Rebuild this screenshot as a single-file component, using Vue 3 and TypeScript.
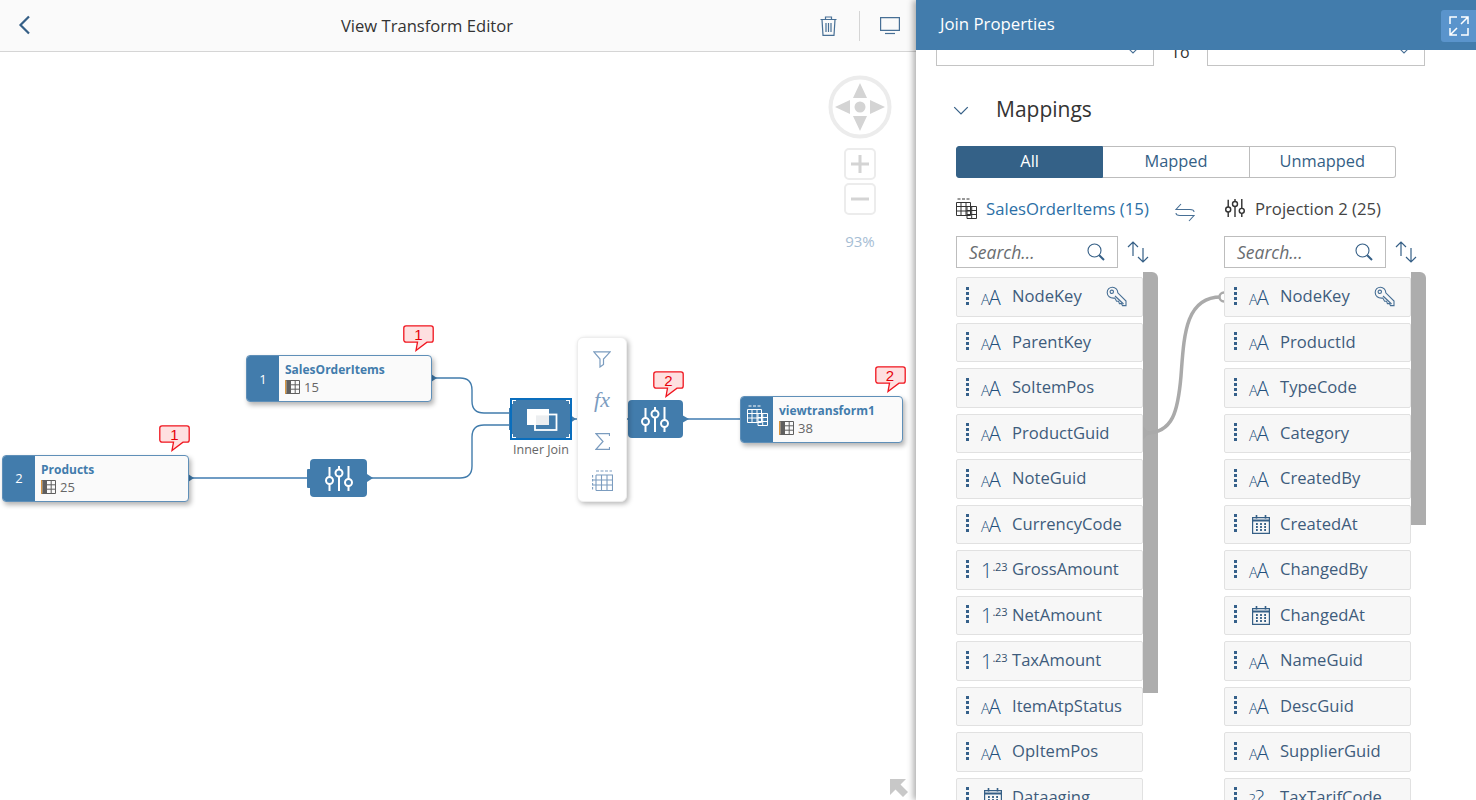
<script setup lang="ts">
type Kind = 'text' | 'num' | 'date' | 'unk'
interface Field { name: string; kind: Kind; key?: boolean }

const leftFields: Field[] = [
  { name: 'NodeKey', kind: 'text', key: true },
  { name: 'ParentKey', kind: 'text' },
  { name: 'SoItemPos', kind: 'text' },
  { name: 'ProductGuid', kind: 'text' },
  { name: 'NoteGuid', kind: 'text' },
  { name: 'CurrencyCode', kind: 'text' },
  { name: 'GrossAmount', kind: 'num' },
  { name: 'NetAmount', kind: 'num' },
  { name: 'TaxAmount', kind: 'num' },
  { name: 'ItemAtpStatus', kind: 'text' },
  { name: 'OpItemPos', kind: 'text' },
  { name: 'Dataaging', kind: 'date' },
]
const rightFields: Field[] = [
  { name: 'NodeKey', kind: 'text', key: true },
  { name: 'ProductId', kind: 'text' },
  { name: 'TypeCode', kind: 'text' },
  { name: 'Category', kind: 'text' },
  { name: 'CreatedBy', kind: 'text' },
  { name: 'CreatedAt', kind: 'date' },
  { name: 'ChangedBy', kind: 'text' },
  { name: 'ChangedAt', kind: 'date' },
  { name: 'NameGuid', kind: 'text' },
  { name: 'DescGuid', kind: 'text' },
  { name: 'SupplierGuid', kind: 'text' },
  { name: 'TaxTarifCode', kind: 'unk' },
]
const columns = [
  { id: 'l', fields: leftFields, barHeight: 421 },
  { id: 'r', fields: rightFields, barHeight: 253 },
]
const nodes = [
  { id: 'a', left: 246, top: 355, width: 186, tag: '1', name: 'SalesOrderItems', count: 15 },
  { id: 'b', left: 2, top: 454.5, width: 186.5, tag: '2', name: 'Products', count: 25 },
  { id: 'c', left: 740, top: 395.5, width: 163, tag: '', name: 'viewtransform1', count: 38 },
]
const badges = [
  { left: 403, top: 325, n: 1 },
  { left: 159, top: 425, n: 1 },
  { left: 653, top: 370.5, n: 2 },
  { left: 874.5, top: 365.5, n: 2 },
]
const projections = [
  { left: 628, top: 400, width: 54.5 },
  { left: 310, top: 459, width: 57 },
]
const box = (l: number, t: number, w?: number) => ({
  left: `${l}px`,
  top: `${t}px`,
  ...(w ? { width: `${w}px` } : {}),
})
</script>

<template>
  <div class="app">
    <svg class="defs" width="0" height="0" aria-hidden="true">
      <symbol id="i-sliders" viewBox="0 0 28 25">
        <g fill="none" stroke="currentColor" stroke-width="2">
          <path d="M4.5 1V11M4.5 18V25M14 0V3.5M14 10.5V25M23.5 0V13M23.5 20V25" />
          <circle cx="4.5" cy="14.5" r="3.5" />
          <circle cx="14" cy="7" r="3.5" />
          <circle cx="23.5" cy="16.5" r="3.5" />
        </g>
      </symbol>
      <symbol id="i-viewtable" viewBox="0 0 21 21">
        <g fill="none" stroke="currentColor" stroke-width="1">
          <path d="M1.5 1H14" stroke-dasharray="3 1.5" />
          <path d="M.5 4.5H14.5V17.5H.5ZM.5 8.500H14.500M.5 13H14.500M5 4.500V17.500M10 4.500V17.500" />
          <path d="M11 8.500H20.500V20.500H11ZM11 12.500H20.500M11 16.500H20.500M15.700 8.500V20.500" />
        </g>
      </symbol>
      <symbol id="i-calendar" viewBox="0 0 18 19">
        <g fill="none" stroke="currentColor" stroke-width="1.2">
          <path d="M.6 2.6H17.4V18.4H.6Z" />
          <path d="M.6 5.5H17.4" stroke-width="2" />
          <path d="M4.5 0V3.5M13.5 0V3.5" stroke-width="1.6" />
          <path d="M4 9H5.8M8.1 9H9.9M12.2 9H14M4 12H5.8M8.1 12H9.9M12.2 12H14M4 15H5.8M8.1 15H9.9M12.2 15H14" stroke-width="1.8" />
        </g>
      </symbol>
      <symbol id="i-key" viewBox="0 0 21 21">
        <g fill="none" stroke="currentColor" stroke-width="1.1">
          <path d="M1.2 6.5A5.2 5.2 0 0 1 6.5 1.2A5.6 5.6 0 0 1 11.8 6.8L20 15V19.6H16.5L15.4 17.6H13.4L12.6 15.2H10.6L8.8 12C4 12.6 1.2 10 1.2 6.5Z" />
          <circle cx="5.8" cy="5.8" r="1.7" />
          <path d="M9 10L17.5 18" />
        </g>
      </symbol>
      <symbol id="i-search" viewBox="0 0 18 18">
        <g fill="none" stroke="currentColor">
          <circle cx="7.5" cy="7.5" r="6.5" stroke-width="1.1" />
          <path d="M12.2 12.2L17 17" stroke-width="2" />
        </g>
      </symbol>
      <symbol id="i-sort" viewBox="0 0 22 22">
        <g fill="none" stroke="currentColor" stroke-width="1.2">
          <path d="M6 1V15M1 6L6 1L11 6" />
          <path d="M16 7V21M11 16L16 21L21 16" />
        </g>
      </symbol>
      <symbol id="i-chevron" viewBox="0 0 14 8">
        <path d="M1 1L7 7L13 1" fill="none" stroke="currentColor" stroke-width="1.1" />
      </symbol>
      <symbol id="i-nodetable" viewBox="0 0 15 14">
        <rect x="0" y="0" width="1.4" height="14" fill="#d9963f" />
        <rect x="1.4" y="0" width="4.6" height="14" fill="#5f5f5f" />
        <path d="M6 .5H14.5V13.5H6M6 4.8H14.5M6 9.2H14.5M10.2 .5V13.5M1.4 .5H6M1.4 13.5H6" fill="none" stroke="#5f5f5f" />
      </symbol>
    </svg>

    <section class="editor">
      <header class="editor-bar">
        <svg class="back" width="13" height="20" viewBox="0 0 13 20"><path d="M11 1.5L2.5 10L11 18.5" fill="none" stroke="#355f86" stroke-width="2.2" /></svg>
        <h1 class="editor-title">View Transform Editor</h1>
        <div class="editor-tools">
          <svg width="17" height="20" viewBox="0 0 17 20" class="tool"><g fill="none" stroke="#476f95" stroke-width="1.2"><path d="M.5 3.5H16.5M5.5 3.5V1H11.5V3.5" /><path d="M2 3.5L3 19.4H14L15 3.5" /><path d="M6 7V16M8.5 7V16M11 7V16" /></g></svg>
          <span class="tool-sep"></span>
          <svg width="20" height="18" viewBox="0 0 20 18" class="tool"><g fill="none" stroke="#476f95" stroke-width="1.2"><path d="M.6 .6H19.4V13.4H.6Z" /><path d="M5 16.5H15" /></g></svg>
        </div>
      </header>

      <div class="canvas">
        <svg class="wires" width="916" height="749" viewBox="0 52 916 749">
          <g fill="none" stroke="#427cac" stroke-width="1.4">
            <path d="M432 378H460Q472 378 472 390V401Q472 413 484 413H510" />
            <path d="M367 478H460Q472 478 472 466V437Q472 425 484 425H510" />
            <path d="M572 419H628" />
          </g>
          <g fill="none" stroke="#6f9cc4" stroke-width="2">
            <path d="M188 478H308" />
            <path d="M682 419H740" />
          </g>
          <g fill="#427cac">
            <path d="M431 374L437 378L431 382Z" />
            <path d="M188 474L194 478L188 482Z" />
            <path d="M367 474L373 478L367 482Z" />
            <path d="M571 415.500L576 419L571 422.500Z" />
            <path d="M682 415L689 419L682 423Z" />
            <rect x="307" y="469" width="4" height="19" rx="1" />
            <rect x="509" y="408" width="4" height="22" />
          </g>
        </svg>

        <article v-for="n in nodes" :key="n.id" class="node" :style="box(n.left, n.top, n.width)">
          <div class="node-tag">
            <template v-if="n.tag">{{ n.tag }}</template>
            <svg v-else width="21" height="21" class="node-view"><use href="#i-viewtable" /></svg>
          </div>
          <div class="node-body">
            <div class="node-name">{{ n.name }}</div>
            <div class="node-count">
              <svg width="15" height="14"><use href="#i-nodetable" /></svg>
              <span>{{ n.count }}</span>
            </div>
          </div>
        </article>

        <div v-for="p in projections" :key="p.left" class="proj" :style="box(p.left, p.top, p.width)">
          <svg width="28" height="25"><use href="#i-sliders" /></svg>
        </div>

        <div class="join">
          <div class="join-box">
            <svg width="33" height="24" viewBox="0 0 33 24">
              <rect x="2" y="2" width="22" height="16" fill="#fff" />
              <rect x="11" y="8" width="13" height="10" fill="#eceef0" />
              <rect x="10" y="7.500" width="21.500" height="15.500" fill="none" stroke="#fff" stroke-width="1.800" />
            </svg>
            <i class="corner c1"></i><i class="corner c2"></i><i class="corner c3"></i><i class="corner c4"></i>
          </div>
          <div class="join-label">Inner Join</div>
        </div>

        <div class="palette">
          <svg width="18" height="17" viewBox="0 0 18 17"><path d="M.8 .8H17.200L10.500 8V13.500L7 16V8Z" fill="none" stroke="#7b9cbf" stroke-width="1.200" /></svg>
          <span class="fx">fx</span>
          <svg width="15" height="17" viewBox="0 0 15 17"><path d="M14.500 3V.7H1L8 8.500L1 16.300H14.500V14" fill="none" stroke="#7b9cbf" stroke-width="1.200" /></svg>
          <svg width="21" height="21" viewBox="0 0 21 21"><g fill="none" stroke="#7b9cbf" stroke-width="1.100"><path d="M4 1H20" stroke-dasharray="3 1.500" /><path d="M.6 5V20.500" stroke-dasharray="2.500 1.500" /><path d="M4 5H20.500V20.500H4M4 5V20.500M9.500 5V20.500M15 5V20.500M.6 10H20.500M.6 15H20.500" /></g></svg>
        </div>

        <div v-for="(b, i) in badges" :key="i" class="badge" :style="box(b.left, b.top)">
          <svg width="31" height="27" viewBox="0 0 31 27"><path d="M3 .8H28A2.200 2.200 0 0 1 30.200 3V15A2.200 2.200 0 0 1 28 17.200H24L13 25.500L14.500 17.200H3A2.200 2.200 0 0 1 .8 15V3A2.200 2.200 0 0 1 3 .8Z" fill="#fee0e0" stroke="#f0141e" stroke-width="1.300" /></svg>
          <span class="badge-n">{{ b.n }}</span>
        </div>

        <div class="navigator">
          <svg width="64" height="64" viewBox="0 0 64 64">
            <circle cx="32" cy="32" r="29.500" fill="#fff" stroke="#ececec" stroke-width="4" />
            <g fill="#d4d4d4">
              <path d="M32 8L39 23H25Z" /><path d="M32 56L39 41H25Z" />
              <path d="M7 32L22 25V39Z" /><path d="M57 32L42 25V39Z" />
              <circle cx="32" cy="32" r="5.500" />
            </g>
          </svg>
          <div class="zoom-btns">
            <div class="zoom-btn"><svg width="20" height="20" viewBox="0 0 20 20"><path d="M10 1V19M1 10H19" stroke="#d4d4d4" stroke-width="3" /></svg></div>
            <div class="zoom-btn"><svg width="20" height="20" viewBox="0 0 20 20"><path d="M1 10H19" stroke="#d4d4d4" stroke-width="3" /></svg></div>
          </div>
          <div class="zoom-pct">93%</div>
        </div>

        <svg class="resize" width="18" height="18" viewBox="0 0 18 18"><path d="M0 0H16L10.500 5.500L18 13L13 18L5.500 10.500L0 16Z" fill="#c8c8c8" /></svg>
      </div>
    </section>

    <aside class="panel">
      <header class="panel-bar">
        <h2 class="panel-title">Join Properties</h2>
        <button class="expand" type="button" aria-label="Expand">
          <svg width="20" height="20" viewBox="0 0 20 20"><g fill="none" stroke="#fff" stroke-width="1.500"><path d="M1 8V1H8M12 1H19V8M19 1L12 8M1 12V19H8M1 19L8 12M12 19H19V12" /></g></svg>
        </button>
      </header>

      <div class="panel-body">
        <div class="joins">
          <div class="select"><svg width="14" height="8"><use href="#i-chevron" /></svg></div>
          <span class="to">To</span>
          <div class="select"><svg width="14" height="8"><use href="#i-chevron" /></svg></div>
        </div>

        <div class="section-head">
          <svg class="section-chev" width="16" height="9"><use href="#i-chevron" /></svg>
          <h3 class="section-title">Mappings</h3>
        </div>

        <div class="segments">
          <button class="segment active" type="button">All</button>
          <button class="segment" type="button">Mapped</button>
          <button class="segment" type="button">Unmapped</button>
        </div>

        <div class="sources">
          <div class="source source-main">
            <svg width="21" height="21" class="src-icon"><use href="#i-viewtable" /></svg>
            <span class="src-link">SalesOrderItems (15)</span>
          </div>
          <svg class="swap" width="20" height="19" viewBox="0 0 20 19"><g fill="none" stroke="#476f95" stroke-width="1.100"><path d="M6 1L1 6.500H15Q19 6.500 19 9" /><path d="M1 10Q1 12.500 5 12.500H19L14 18" /></g></svg>
          <div class="source">
            <svg width="20" height="18" class="src-icon"><use href="#i-sliders" /></svg>
            <span class="src-text">Projection 2 (25)</span>
          </div>
        </div>

        <div class="lists">
          <svg class="link" width="90" height="160" viewBox="0 0 90 160">
            <path d="M3 147C30 147 35 125 38 90C41 50 42 11 78 11" fill="none" stroke="#aaaaaa" stroke-width="3.500" />
            <path d="M0 140L6 147L0 154Z" fill="#aaaaaa" />
            <circle cx="81" cy="11" r="4.500" fill="#fff" stroke="#aaaaaa" stroke-width="2.500" />
          </svg>
          <div v-for="c in columns" :key="c.id" class="col">
            <div class="col-tools">
              <div class="search">
                <span class="search-ph">Search...</span>
                <svg width="18" height="18"><use href="#i-search" /></svg>
              </div>
              <svg class="sort" width="22" height="22"><use href="#i-sort" /></svg>
            </div>
            <div class="rows">
              <div class="bar" :style="{ height: c.barHeight + 'px' }"></div>
              <div v-for="f in c.fields" :key="f.name" class="row">
                <i class="grip"></i>
                <span class="kind">
                  <template v-if="f.kind === 'text'"><span class="aa-s">A</span><span class="aa-l">A</span></template>
                  <template v-else-if="f.kind === 'num'"><span class="num-1">1</span><span class="num-2">.23</span></template>
                  <svg v-else-if="f.kind === 'date'" width="18" height="19"><use href="#i-calendar" /></svg>
                  <template v-else><span class="unk-s">?</span><span class="unk-l">?</span></template>
                </span>
                <span class="fname">{{ f.name }}</span>
                <svg v-if="f.key" class="key" width="21" height="21"><use href="#i-key" /></svg>
              </div>
            </div>
          </div>
        </div>
      </div>
    </aside>
  </div>
</template>

<style scoped>
.app {
  position: relative;
  display: flex;
  width: 1476px;
  height: 800px;
  overflow: hidden;
  background: #fff;
  font-family: "Open Sans", "Liberation Sans", sans-serif;
  color: #333;
}
.defs { position: absolute; }
.editor { flex: 0 0 916px; display: flex; flex-direction: column; min-width: 0; }
.editor-bar {
  flex: 0 0 52px;
  box-sizing: border-box;
  display: flex;
  align-items: center;
  padding-left: 18px;
  background: #fafafa;
  border-bottom: 1px solid #d5d5d5;
}
.back { display: block; margin-top: -1px; }
.editor-title {
  flex: 1;
  margin: 0 0 0 3px;
  text-align: center;
  font-size: 16.600px;
  font-weight: 400;
  color: #333;
}
.editor-tools { display: flex; align-items: center; padding-right: 16px; }
.tool { display: block; }
.tool-sep { width: 1px; height: 30px; background: #d5d5d5; margin: 0 20px 0 22px; }
.canvas { position: relative; flex: 1; overflow: hidden; background: #fff; }
.wires { position: absolute; left: 0; top: 0; }
.node {
  position: absolute;
  margin-top: -52px;
  box-sizing: border-box;
  height: 47px;
  display: flex;
  border: 1px solid #5f8fb8;
  border-radius: 4px;
  overflow: hidden;
  background: #fafafa;
  box-shadow: 2px 3px 5px rgba(0, 0, 0, .3);
}
.node-tag {
  flex: 0 0 32px;
  display: flex;
  justify-content: center;
  align-items: center;
  background: #427cac;
  color: #fff;
  font-size: 13px;
}
.node-view { color: #fff; margin-top: -8px; }
.node-body { padding: 6px 0 0 6px; min-width: 0; }
.node-name { font-size: 12px; line-height: 15px; font-weight: 700; color: #427cac; white-space: nowrap; }
.node-count { display: flex; align-items: center; gap: 4px; margin-top: 2px; font-size: 13px; line-height: 16px; color: #666; }
.node-count svg { display: block; }
.proj {
  position: absolute;
  margin-top: -52px;
  height: 38px;
  display: flex;
  align-items: center;
  justify-content: center;
  border-radius: 4px;
  background: #427cac;
  color: #fff;
}
.join {
  position: absolute;
  left: 510px;
  top: 346px;
  width: 62px;
  display: flex;
  flex-direction: column;
  align-items: center;
}
.join-box {
  position: relative;
  box-sizing: border-box;
  width: 62px;
  height: 42px;
  display: flex;
  align-items: center;
  justify-content: center;
  background: #427cac;
  border: 2px solid #0a6ebd;
}
.corner { position: absolute; width: 3px; height: 3px; }
.c1 { left: 0; top: 0; border-left: 1px solid #fff; border-top: 1px solid #fff; }
.c2 { right: 0; top: 0; border-right: 1px solid #fff; border-top: 1px solid #fff; }
.c3 { left: 0; bottom: 0; border-left: 1px solid #fff; border-bottom: 1px solid #fff; }
.c4 { right: 0; bottom: 0; border-right: 1px solid #fff; border-bottom: 1px solid #fff; }
.join-label { margin-top: 2px; font-size: 12.500px; line-height: 16px; color: #666; white-space: nowrap; }
.palette {
  position: absolute;
  left: 577px;
  top: 285px;
  box-sizing: border-box;
  width: 50px;
  height: 165px;
  padding: 13px 0 10px;
  display: flex;
  flex-direction: column;
  align-items: center;
  justify-content: space-between;
  background: #fff;
  border: 1px solid #eee;
  border-radius: 6px;
  box-shadow: 2px 2px 5px rgba(0, 0, 0, .28);
}
.fx { font-family: "Liberation Serif", serif; font-style: italic; font-size: 22px; line-height: 24px; color: #7b9cbf; }
.badge { position: absolute; margin-top: -52px; width: 31px; height: 27px; }
.badge svg { position: absolute; left: 0; top: 0; }
.badge-n {
  position: absolute;
  left: 0;
  top: 1px;
  width: 31px;
  text-align: center;
  font-family: "Liberation Sans", sans-serif;
  font-size: 15px;
  line-height: 18px;
  color: #e6000a;
}
.navigator {
  position: absolute;
  left: 828px;
  top: 23px;
  width: 64px;
  display: flex;
  flex-direction: column;
  align-items: center;
}
.navigator > svg { display: block; }
.zoom-btns { display: flex; flex-direction: column; gap: 3px; margin-top: 9px; }
.zoom-btn {
  box-sizing: border-box;
  width: 32px;
  height: 32px;
  display: flex;
  align-items: center;
  justify-content: center;
  border: 2px solid #ececec;
  border-radius: 5px;
}
.zoom-pct { margin-top: 17px; font-size: 15px; line-height: 18px; color: #a6bdd4; }
.resize { position: absolute; left: 890px; bottom: 3px; }

.panel {
  position: relative;
  flex: 0 0 560px;
  display: flex;
  flex-direction: column;
  min-width: 0;
  background: #fff;
  box-shadow: -3px 0 6px rgba(0, 0, 0, .3);
}
.panel-bar {
  flex: 0 0 50px;
  display: flex;
  align-items: center;
  justify-content: space-between;
  padding-left: 24px;
  background: #427cac;
  position: relative;
  z-index: 1;
}
.panel-title { margin: -4px 0 0; font-size: 16.800px; font-weight: 400; color: #fff; }
.expand {
  width: 35px;
  height: 32px;
  margin-top: 1px;
  padding: 0;
  border: 0;
  border-radius: 3px 0 0 3px;
  display: flex;
  align-items: center;
  justify-content: center;
  background: #5a94cc;
}
.panel-body { flex: 1; min-height: 0; overflow: hidden; }
.joins { display: flex; align-items: flex-start; margin: -16px 0 0 20px; height: 32px; }
.select {
  box-sizing: border-box;
  width: 218px;
  height: 32px;
  display: flex;
  align-items: center;
  justify-content: flex-end;
  padding: 0 13px 0 0;
  border: 1px solid #c4c4c4;
  color: #476f95;
}
.to { width: 53px; text-align: center; font-size: 16px; line-height: 36px; color: #333; }
.section-head { display: flex; align-items: center; height: 32px; margin-top: 27px; padding-left: 37px; }
.section-chev { color: #355f86; margin-top: 3px; }
.section-title { margin: 0 0 0 27px; font-size: 21px; font-weight: 400; color: #333; }
.segments { display: flex; width: 440px; margin: 21px 0 0 40px; }
.segment {
  flex: 1;
  height: 32px;
  padding: 0 0 3px;
  margin: 0;
  background: #fff;
  border: 1px solid #bdbdbd;
  border-left-width: 0;
  font: inherit;
  font-size: 16.400px;
  color: #355f86;
}
.segment:last-child { border-radius: 0 3px 3px 0; }
.segment.active { background: #346187; border-color: #346187; border-left-width: 1px; border-radius: 3px 0 0 3px; color: #fff; }
.sources { display: flex; align-items: center; height: 28px; margin: 16px 0 0 40px; }
.source { display: flex; align-items: center; }
.source-main { width: 219px; flex: none; }
.src-icon { display: block; color: #333; flex: none; }
.src-link { margin-left: 9px; font-size: 16.700px; color: #2c6fa6; white-space: nowrap; }
.src-text { margin-left: 10px; font-size: 16.700px; color: #444; white-space: nowrap; }
.swap { margin: 8px 30px 0 0; flex: none; }
.lists { position: relative; display: flex; gap: 66px; margin: 14px 0 0 40px; }
.col { width: 202px; flex: none; }
.col-tools { display: flex; align-items: center; }
.search {
  box-sizing: border-box;
  width: 162px;
  height: 32px;
  display: flex;
  align-items: center;
  justify-content: space-between;
  padding: 0 12px 0 12px;
  border: 1px solid #bdbdbd;
  color: #355f86;
}
.search-ph { font-size: 17.500px; font-style: italic; color: #6a6d70; }
.sort { margin-left: 9px; color: #355f86; }
.rows { position: relative; margin-top: 4px; padding-top: 5px; display: flex; flex-direction: column; gap: 6px; width: 187px; }
.bar { position: absolute; left: 187px; top: 0; width: 15px; background: #adadad; border-radius: 0 6px 0 0; }
.row {
  position: relative;
  z-index: 3;
  box-sizing: border-box;
  flex: none;
  height: 39.500px;
  display: flex;
  align-items: center;
  padding-left: 9px;
  background: #f7f7f7;
  border: 1px solid #e1e1e1;
  border-radius: 2px;
}
.grip {
  flex: none;
  width: 3px;
  height: 18px;
  margin-top: -2px;
  background: repeating-linear-gradient(to bottom, #35608a 0 3px, transparent 3px 5px);
}
.kind {
  flex: none;
  width: 31px;
  margin-left: 12px;
  height: 24px;
  display: flex;
  align-items: flex-end;
  color: #23507c;
}
.kind svg { display: block; margin: 0 0 2px 3px; color: #355f86; }
.aa-s { font-size: 14.500px; line-height: 18px; font-weight: 300; margin-right: -1px; }
.aa-l { font-size: 20px; line-height: 21px; font-weight: 300; margin-bottom: 1px; }
.num-1 { font-size: 20px; line-height: 23px; font-weight: 300; }
.num-2 { font-size: 11px; line-height: 18px; align-self: flex-start; color: #35506d; letter-spacing: -.2px; }
.unk-s { font-size: 15px; line-height: 20px; font-weight: 300; }
.unk-l { font-size: 21px; line-height: 23px; font-weight: 300; }
.fname { font-size: 16.600px; color: #3e5c7c; white-space: nowrap; margin-top: -2px; }
.key { margin-left: auto; margin-right: 15px; color: #476f95; flex: none; }
.link { position: absolute; left: 187px; top: 50px; pointer-events: none; z-index: 2; }
</style>
